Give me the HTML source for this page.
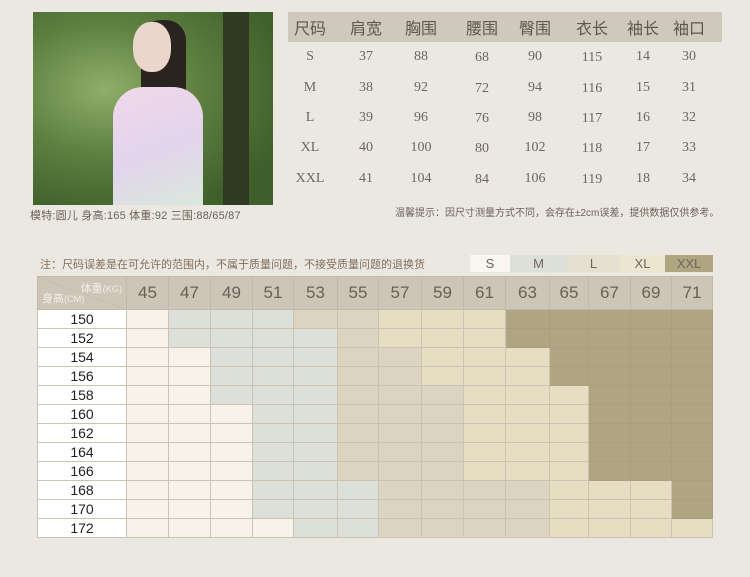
<!DOCTYPE html>
<html><head><meta charset="utf-8"><style>
*{margin:0;padding:0;box-sizing:border-box}
body{width:750px;height:577px;background:#ebe8e2;position:relative;overflow:hidden;font-family:"Liberation Sans","Noto Sans CJK SC",sans-serif}
.abs{position:absolute}
.photo{left:33px;top:12px;width:240px;height:193px;background:radial-gradient(ellipse at 30% 40%,#8fae6a 0%,#5d8040 40%,#3f5f2c 80%);overflow:hidden}
.cap{left:30px;top:207px;font-size:11px;color:#6a6258;letter-spacing:0.2px}
.band{left:288px;top:12px;width:434px;height:30px;background:#cfc8bc}
.tt{font-family:"Liberation Serif","Noto Serif CJK SC",serif;color:#6c665e;font-size:14px;position:absolute;transform:translateX(-50%);white-space:nowrap}
.th{font-family:"Liberation Sans","Noto Sans CJK SC",sans-serif;font-size:16px;color:#5f574d}
.tip{left:395px;top:204px;font-size:10px;color:#6a625a}
.note{left:40px;top:256px;font-size:11px;color:#806e5c}
.lg{top:255px;height:17px;font-size:13px;color:#6e665c;text-align:center;line-height:17px}
table{position:absolute;left:37px;top:276px;border-collapse:collapse;table-layout:fixed}
td{border:1px solid #cbc3b4;height:19px;padding:0;font-size:13px;text-align:center;color:#222;font-family:"Liberation Sans Narrow","Liberation Sans",sans-serif}
tr.h td{height:33px;background:#cdc5b7;color:#6a6055;font-size:17px;border-color:#c2b9aa}
td.l{background:#fff;font-size:14px}
.S{background:#f7f3ea}.M{background:#dde0d9}.L{background:#dcd3c1}.X{background:#e7ddc3}.Z{background:#afa681;border-color:#a89f7c}
</style></head><body>
<div class="abs photo">
 <div class="abs" style="left:190px;top:0;width:26px;height:193px;background:#2f3a22"></div>
 <div class="abs" style="left:108px;top:8px;width:45px;height:150px;background:#2a2420;border-radius:20px 20px 10px 10px"></div>
 <div class="abs" style="left:100px;top:10px;width:38px;height:50px;background:#ead6cc;border-radius:45%"></div>
 <div class="abs" style="left:80px;top:75px;width:90px;height:130px;background:linear-gradient(160deg,#f0d8ea,#e2d4ec 50%,#d8ecd8);border-radius:30px 30px 0 0"></div>
</div>
<div class="abs cap">模特:圆儿 身高:165 体重:92 三围:88/65/87</div>
<div class="abs band"></div>
<div class="tt th" style="left:310px;top:15px">尺码</div>
<div class="tt th" style="left:366px;top:15px">肩宽</div>
<div class="tt th" style="left:421px;top:15px">胸围</div>
<div class="tt th" style="left:482px;top:15px">腰围</div>
<div class="tt th" style="left:535px;top:15px">臀围</div>
<div class="tt th" style="left:592px;top:15px">衣长</div>
<div class="tt th" style="left:643px;top:15px">袖长</div>
<div class="tt th" style="left:689px;top:15px">袖口</div>

<div class="tt" style="left:310px;top:49px">S</div><div class="tt" style="left:366px;top:49px">37</div><div class="tt" style="left:421px;top:49px">88</div><div class="tt" style="left:482px;top:50px">68</div><div class="tt" style="left:535px;top:49px">90</div><div class="tt" style="left:592px;top:50px">115</div><div class="tt" style="left:643px;top:49px">14</div><div class="tt" style="left:689px;top:49px">30</div>
<div class="tt" style="left:310px;top:80px">M</div><div class="tt" style="left:366px;top:80px">38</div><div class="tt" style="left:421px;top:80px">92</div><div class="tt" style="left:482px;top:81px">72</div><div class="tt" style="left:535px;top:80px">94</div><div class="tt" style="left:592px;top:81px">116</div><div class="tt" style="left:643px;top:80px">15</div><div class="tt" style="left:689px;top:80px">31</div>
<div class="tt" style="left:310px;top:110px">L</div><div class="tt" style="left:366px;top:110px">39</div><div class="tt" style="left:421px;top:110px">96</div><div class="tt" style="left:482px;top:111px">76</div><div class="tt" style="left:535px;top:110px">98</div><div class="tt" style="left:592px;top:111px">117</div><div class="tt" style="left:643px;top:110px">16</div><div class="tt" style="left:689px;top:110px">32</div>
<div class="tt" style="left:310px;top:140px">XL</div><div class="tt" style="left:366px;top:140px">40</div><div class="tt" style="left:421px;top:140px">100</div><div class="tt" style="left:482px;top:141px">80</div><div class="tt" style="left:535px;top:140px">102</div><div class="tt" style="left:592px;top:141px">118</div><div class="tt" style="left:643px;top:140px">17</div><div class="tt" style="left:689px;top:140px">33</div>
<div class="tt" style="left:310px;top:171px">XXL</div><div class="tt" style="left:366px;top:171px">41</div><div class="tt" style="left:421px;top:171px">104</div><div class="tt" style="left:482px;top:172px">84</div><div class="tt" style="left:535px;top:171px">106</div><div class="tt" style="left:592px;top:172px">119</div><div class="tt" style="left:643px;top:171px">18</div><div class="tt" style="left:689px;top:171px">34</div>

<div class="abs tip">温馨提示：因尺寸测量方式不同，会存在±2cm误差，提供数据仅供参考。</div>
<div class="abs note">注：尺码误差是在可允许的范围内，不属于质量问题，不接受质量问题的退换货</div>
<div class="abs lg" style="left:470px;width:40px;background:#f8f6ef">S</div>
<div class="abs lg M" style="left:510px;width:57px">M</div>
<div class="abs lg" style="left:567px;width:53px;background:#e6e0d2">L</div>
<div class="abs lg" style="left:620px;width:45px;background:#ece5cf">XL</div>
<div class="abs lg Z" style="left:665px;width:48px">XXL</div>

<table>
<colgroup><col style="width:89px"><col style="width:42px"><col style="width:42px"><col style="width:42px"><col style="width:41px"><col style="width:44px"><col style="width:41px"><col style="width:43px"><col style="width:42px"><col style="width:42px"><col style="width:44px"><col style="width:39px"><col style="width:42px"><col style="width:41px"><col style="width:41px"></colgroup>
<tr class="h"><td style="position:relative;background:linear-gradient(to top right,#cdc5b7 49.3%,#bdb3a3 50%,#cdc5b7 50.7%)"><span style="position:absolute;right:4px;top:3px;font-size:11px;color:#f3eee6">体重<small>(KG)</small></span><span style="position:absolute;left:4px;bottom:3px;font-size:11px;color:#f3eee6">身高<small>(CM)</small></span></td><td>45</td><td>47</td><td>49</td><td>51</td><td>53</td><td>55</td><td>57</td><td>59</td><td>61</td><td>63</td><td>65</td><td>67</td><td>69</td><td>71</td></tr>
<tr><td class="l">150</td><td class="S"></td><td class="M"></td><td class="M"></td><td class="M"></td><td class="L"></td><td class="L"></td><td class="X"></td><td class="X"></td><td class="X"></td><td class="Z"></td><td class="Z"></td><td class="Z"></td><td class="Z"></td><td class="Z"></td></tr>
<tr><td class="l">152</td><td class="S"></td><td class="M"></td><td class="M"></td><td class="M"></td><td class="M"></td><td class="L"></td><td class="X"></td><td class="X"></td><td class="X"></td><td class="Z"></td><td class="Z"></td><td class="Z"></td><td class="Z"></td><td class="Z"></td></tr>
<tr><td class="l">154</td><td class="S"></td><td class="S"></td><td class="M"></td><td class="M"></td><td class="M"></td><td class="L"></td><td class="L"></td><td class="X"></td><td class="X"></td><td class="X"></td><td class="Z"></td><td class="Z"></td><td class="Z"></td><td class="Z"></td></tr>
<tr><td class="l">156</td><td class="S"></td><td class="S"></td><td class="M"></td><td class="M"></td><td class="M"></td><td class="L"></td><td class="L"></td><td class="X"></td><td class="X"></td><td class="X"></td><td class="Z"></td><td class="Z"></td><td class="Z"></td><td class="Z"></td></tr>
<tr><td class="l">158</td><td class="S"></td><td class="S"></td><td class="M"></td><td class="M"></td><td class="M"></td><td class="L"></td><td class="L"></td><td class="L"></td><td class="X"></td><td class="X"></td><td class="X"></td><td class="Z"></td><td class="Z"></td><td class="Z"></td></tr>
<tr><td class="l">160</td><td class="S"></td><td class="S"></td><td class="S"></td><td class="M"></td><td class="M"></td><td class="L"></td><td class="L"></td><td class="L"></td><td class="X"></td><td class="X"></td><td class="X"></td><td class="Z"></td><td class="Z"></td><td class="Z"></td></tr>
<tr><td class="l">162</td><td class="S"></td><td class="S"></td><td class="S"></td><td class="M"></td><td class="M"></td><td class="L"></td><td class="L"></td><td class="L"></td><td class="X"></td><td class="X"></td><td class="X"></td><td class="Z"></td><td class="Z"></td><td class="Z"></td></tr>
<tr><td class="l">164</td><td class="S"></td><td class="S"></td><td class="S"></td><td class="M"></td><td class="M"></td><td class="L"></td><td class="L"></td><td class="L"></td><td class="X"></td><td class="X"></td><td class="X"></td><td class="Z"></td><td class="Z"></td><td class="Z"></td></tr>
<tr><td class="l">166</td><td class="S"></td><td class="S"></td><td class="S"></td><td class="M"></td><td class="M"></td><td class="L"></td><td class="L"></td><td class="L"></td><td class="X"></td><td class="X"></td><td class="X"></td><td class="Z"></td><td class="Z"></td><td class="Z"></td></tr>
<tr><td class="l">168</td><td class="S"></td><td class="S"></td><td class="S"></td><td class="M"></td><td class="M"></td><td class="M"></td><td class="L"></td><td class="L"></td><td class="L"></td><td class="L"></td><td class="X"></td><td class="X"></td><td class="X"></td><td class="Z"></td></tr>
<tr><td class="l">170</td><td class="S"></td><td class="S"></td><td class="S"></td><td class="M"></td><td class="M"></td><td class="M"></td><td class="L"></td><td class="L"></td><td class="L"></td><td class="L"></td><td class="X"></td><td class="X"></td><td class="X"></td><td class="Z"></td></tr>
<tr><td class="l">172</td><td class="S"></td><td class="S"></td><td class="S"></td><td class="S"></td><td class="M"></td><td class="M"></td><td class="L"></td><td class="L"></td><td class="L"></td><td class="L"></td><td class="X"></td><td class="X"></td><td class="X"></td><td class="X"></td></tr>
</table>
</body></html>
